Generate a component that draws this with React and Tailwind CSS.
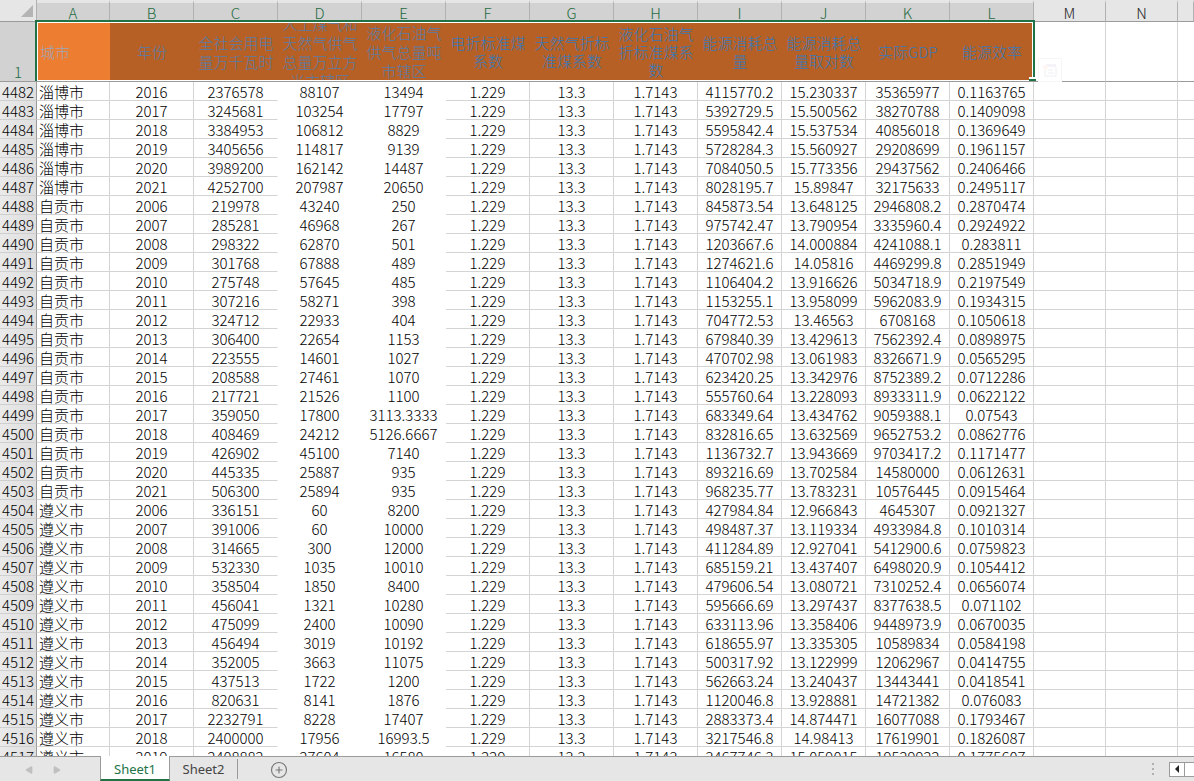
import { CirclePlus, Triangle } from "lucide-react";

const SHEET_FONT = "font-['Noto_Sans_CJK_SC','Noto_Sans',sans-serif]";

const columns = [
  { letter: "A", title: ["城市"] },
  { letter: "B", title: ["年份"] },
  { letter: "C", title: ["全社会用电", "量万千瓦时"] },
  { letter: "D", title: ["人工煤气和", "天然气供气", "总量万立方", "米市辖区"] },
  { letter: "E", title: ["液化石油气", "供气总量吨", "市辖区"] },
  { letter: "F", title: ["电折标准煤", "系数"] },
  { letter: "G", title: ["天然气折标", "准煤系数"] },
  { letter: "H", title: ["液化石油气", "折标准煤系", "数"] },
  { letter: "I", title: ["能源消耗总", "量"] },
  { letter: "J", title: ["能源消耗总", "量取对数"] },
  { letter: "K", title: ["实际GDP"] },
  { letter: "L", title: ["能源效率"] },
];

// conversion factors in F, G and H are the same for every city
const factors = ["1.229", "13.3", "1.7143"];

const FIRST_ROW = 4482;

// city, year, C, D, E, I, J, K, L
const records = `
淄博市 2016 2376578 88107 13494 4115770.2 15.230337 35365977 0.1163765
淄博市 2017 3245681 103254 17797 5392729.5 15.500562 38270788 0.1409098
淄博市 2018 3384953 106812 8829 5595842.4 15.537534 40856018 0.1369649
淄博市 2019 3405656 114817 9139 5728284.3 15.560927 29208699 0.1961157
淄博市 2020 3989200 162142 14487 7084050.5 15.773356 29437562 0.2406466
淄博市 2021 4252700 207987 20650 8028195.7 15.89847 32175633 0.2495117
自贡市 2006 219978 43240 250 845873.54 13.648125 2946808.2 0.2870474
自贡市 2007 285281 46968 267 975742.47 13.790954 3335960.4 0.2924922
自贡市 2008 298322 62870 501 1203667.6 14.000884 4241088.1 0.283811
自贡市 2009 301768 67888 489 1274621.6 14.05816 4469299.8 0.2851949
自贡市 2010 275748 57645 485 1106404.2 13.916626 5034718.9 0.2197549
自贡市 2011 307216 58271 398 1153255.1 13.958099 5962083.9 0.1934315
自贡市 2012 324712 22933 404 704772.53 13.46563 6708168 0.1050618
自贡市 2013 306400 22654 1153 679840.39 13.429613 7562392.4 0.0898975
自贡市 2014 223555 14601 1027 470702.98 13.061983 8326671.9 0.0565295
自贡市 2015 208588 27461 1070 623420.25 13.342976 8752389.2 0.0712286
自贡市 2016 217721 21526 1100 555760.64 13.228093 8933311.9 0.0622122
自贡市 2017 359050 17800 3113.3333 683349.64 13.434762 9059388.1 0.07543
自贡市 2018 408469 24212 5126.6667 832816.65 13.632569 9652753.2 0.0862776
自贡市 2019 426902 45100 7140 1136732.7 13.943669 9703417.2 0.1171477
自贡市 2020 445335 25887 935 893216.69 13.702584 14580000 0.0612631
自贡市 2021 506300 25894 935 968235.77 13.783231 10576445 0.0915464
遵义市 2006 336151 60 8200 427984.84 12.966843 4645307 0.0921327
遵义市 2007 391006 60 10000 498487.37 13.119334 4933984.8 0.1010314
遵义市 2008 314665 300 12000 411284.89 12.927041 5412900.6 0.0759823
遵义市 2009 532330 1035 10010 685159.21 13.437407 6498020.9 0.1054412
遵义市 2010 358504 1850 8400 479606.54 13.080721 7310252.4 0.0656074
遵义市 2011 456041 1321 10280 595666.69 13.297437 8377638.5 0.071102
遵义市 2012 475099 2400 10090 633113.96 13.358406 9448973.9 0.0670035
遵义市 2013 456494 3019 10192 618655.97 13.335305 10589834 0.0584198
遵义市 2014 352005 3663 11075 500317.92 13.122999 12062967 0.0414755
遵义市 2015 437513 1722 1200 562663.24 13.240437 13443441 0.0418541
遵义市 2016 820631 8141 1876 1120046.8 13.928881 14721382 0.076083
遵义市 2017 2232791 8228 17407 2883373.4 14.874471 16077088 0.1793467
遵义市 2018 2400000 17956 16993.5 3217546.8 14.98413 17619901 0.1826087
遵义市 2019 2408882 27604 16580 3467746.3 15.059015 19529922 0.1775607
`
  .trim()
  .split("\n")
  .map((line) => {
    const cells = line.split(" ");
    return [...cells.slice(0, 5), ...factors, ...cells.slice(5)];
  });

// C, D and E are filled white, which hides their inner gridlines
function gridClass(index) {
  if (index === 3 || index === 4) return "border-r border-b border-white";
  if (index === 2) return "border-r border-b border-r-white border-b-[#d4d4d4]";
  return "border-r border-b border-[#d4d4d4]";
}

function TitleCell({ title, index }) {
  const tight = index > 4;
  return (
    <th
      scope="col"
      className={`border-b border-[#9b9b9b] p-0 font-light ${
        index === 0 ? "bg-[#ed7d31] text-[#9fa6b4]" : tight ? "bg-[#b66026] text-[#3a78b4]" : "bg-[#b66026] text-[#5a7ca4]"
      }`}
    >
      <div
        className={`flex h-[59px] flex-col justify-center overflow-hidden whitespace-nowrap ${
          index === 0 ? "items-start pl-[3px]" : "items-center"
        } ${tight ? "leading-[18px]" : "leading-[19px]"}`}
      >
        {title.map((line) => (
          <span key={line} className="block shrink-0">
            {line}
          </span>
        ))}
      </div>
    </th>
  );
}

function Selection() {
  return (
    <div className="pointer-events-none absolute top-5 left-[35px] h-[61px] w-[1000px] border-2 border-b-0 border-[#217346]">
      <div className="h-full border border-white" />
      <span className="absolute -right-[3px] bottom-0 h-1 w-[7px] border-t-2 border-white bg-[#217346]" />
      <button
        type="button"
        aria-label="Quick analysis"
        className="absolute top-[36px] left-[1001px] flex h-6 w-6 items-center justify-center border border-[#f6f6f6]"
      >
        <svg viewBox="0 0 16 16" className="h-4 w-4" fill="none">
          <path d="M4 2h10v3H4z" fill="#f6f3f8" />
          <path d="M3 7v7h11V5M6 8h5M6 11h6" stroke="#f5f5f8" strokeWidth="1.5" />
          <path d="M1 3h5v3l-4 3z" fill="#fdf6f2" />
        </svg>
      </button>
    </div>
  );
}

function Sheet() {
  return (
    <main className="relative min-h-0 flex-1 overflow-hidden">
      <table className="w-full table-fixed border-separate border-spacing-0 text-center text-[15px] leading-[18px] font-light text-black">
        <colgroup>
          <col className="w-[37px]" />
          <col className="w-[73px]" />
          {columns.slice(1).map((column) => (
            <col key={column.letter} className="w-[84px]" />
          ))}
          <col className="w-[72px]" />
          <col className="w-[72px]" />
          <col />
        </colgroup>
        <thead>
          <tr className="h-[22px] bg-[#e6e6e6]">
            <th className="border-r border-b border-[#9b9b9b] border-r-[#b1b1b1] p-0">
              <svg viewBox="0 0 12 12" className="mr-[3px] ml-auto h-3 w-3">
                <path d="M12 0v12H0z" fill="#b4b4b4" />
              </svg>
            </th>
            {columns.map(({ letter }) => (
              <th
                key={letter}
                className="border-t-3 border-r border-b border-t-[#e6e6e6] border-r-[#b1b1b1] border-b-[#9b9b9b] bg-[#d2d2d2] p-0 font-light text-[#1e6b41]"
              >
                <div className="h-[18px] leading-[20px]">{letter}</div>
              </th>
            ))}
            {["M", "N", ""].map((letter) => (
              <th
                key={letter}
                className="border-t-3 border-r border-b border-t-[#e6e6e6] border-r-[#b1b1b1] border-b-[#9b9b9b] p-0 font-light text-[#222]"
              >
                <div className="h-[18px] leading-[20px]">{letter}</div>
              </th>
            ))}
          </tr>
          <tr className="h-[60px]">
            <th
              scope="row"
              className="border-r border-b border-[#9b9b9b] bg-[#d2d2d2] p-0 align-bottom font-light text-[#1e6b41]"
            >
              1
            </th>
            {columns.map(({ letter, title }, index) => (
              <TitleCell key={letter} title={title} index={index} />
            ))}
            <td className="border-r border-b border-r-[#d4d4d4] border-b-[#9b9b9b]" />
            <td className="border-r border-b border-r-[#d4d4d4] border-b-[#9b9b9b]" />
            <td className="border-b border-b-[#9b9b9b]" />
          </tr>
        </thead>
        <tbody>
          {records.map((cells, row) => (
            <tr key={row} className="h-[19px]">
              <th
                scope="row"
                className="border-r border-b border-r-[#9b9b9b] border-b-[#cfcfcf] bg-linear-to-r from-[#eaeaea] to-[#dedede] p-0 font-light"
              >
                <div className="h-[18px] leading-[20px]">{FIRST_ROW + row}</div>
              </th>
              {cells.map((value, index) => (
                <td key={index} className={`p-0 ${index === 0 ? "pl-0.5 text-left" : ""} ${gridClass(index)}`}>
                  <div className="h-[18px] leading-[20px] whitespace-nowrap">{value}</div>
                </td>
              ))}
              <td className="border-r border-b border-[#d4d4d4] p-0" />
              <td className="border-r border-b border-[#d4d4d4] p-0" />
              <td className="border-b border-[#d4d4d4] p-0" />
            </tr>
          ))}
        </tbody>
      </table>
      <Selection />
    </main>
  );
}

function SheetBar() {
  return (
    <footer className="flex h-[25px] shrink-0 items-stretch bg-[#e6e6e6] font-['Noto_Sans',sans-serif] text-[13px] leading-5 text-[#444]">
      <div className="flex w-[100px] items-center gap-5 border-t border-[#9b9b9b] pt-0.5 pl-[25px] text-[#c0c0c0]">
        <button type="button" aria-label="Previous sheet">
          <Triangle size={8} fill="currentColor" className="-rotate-90" />
        </button>
        <button type="button" aria-label="Next sheet">
          <Triangle size={8} fill="currentColor" className="rotate-90" />
        </button>
      </div>
      <button
        type="button"
        className="w-[70px] border-x border-b-2 border-x-[#9b9b9b] border-b-[#217346] bg-white pt-0.5 text-[#217346]"
      >
        Sheet1
      </button>
      <div className="flex flex-1 items-center border-t border-[#9b9b9b]">
        <button type="button" className="h-5 w-[68px] border-r border-[#9b9b9b]">
          Sheet2
        </button>
        <button type="button" aria-label="New sheet" className="ml-8 pt-0.5 text-[#777]">
          <CirclePlus size={18} strokeWidth={1.5} />
        </button>
        <div className="mr-[15px] ml-auto flex flex-col gap-[3px]">
          <span className="h-0.5 w-0.5 bg-[#b0b0b0]" />
          <span className="h-0.5 w-0.5 bg-[#b0b0b0]" />
          <span className="h-0.5 w-0.5 bg-[#b0b0b0]" />
        </div>
        <button
          type="button"
          aria-label="Scroll left"
          className="flex h-[15px] w-4 items-center justify-center border border-[#9b9b9b] bg-white text-black"
        >
          <svg viewBox="0 0 4 8" className="h-2 w-1">
            <path d="M4 0v8L0 4z" fill="#222" />
          </svg>
        </button>
        <div className="h-[15px] w-[9px] border-y border-[#9b9b9b] bg-white" />
      </div>
    </footer>
  );
}

export default function App() {
  return (
    <div className={`flex h-screen flex-col overflow-hidden bg-white ${SHEET_FONT}`}>
      <Sheet />
      <SheetBar />
    </div>
  );
}
